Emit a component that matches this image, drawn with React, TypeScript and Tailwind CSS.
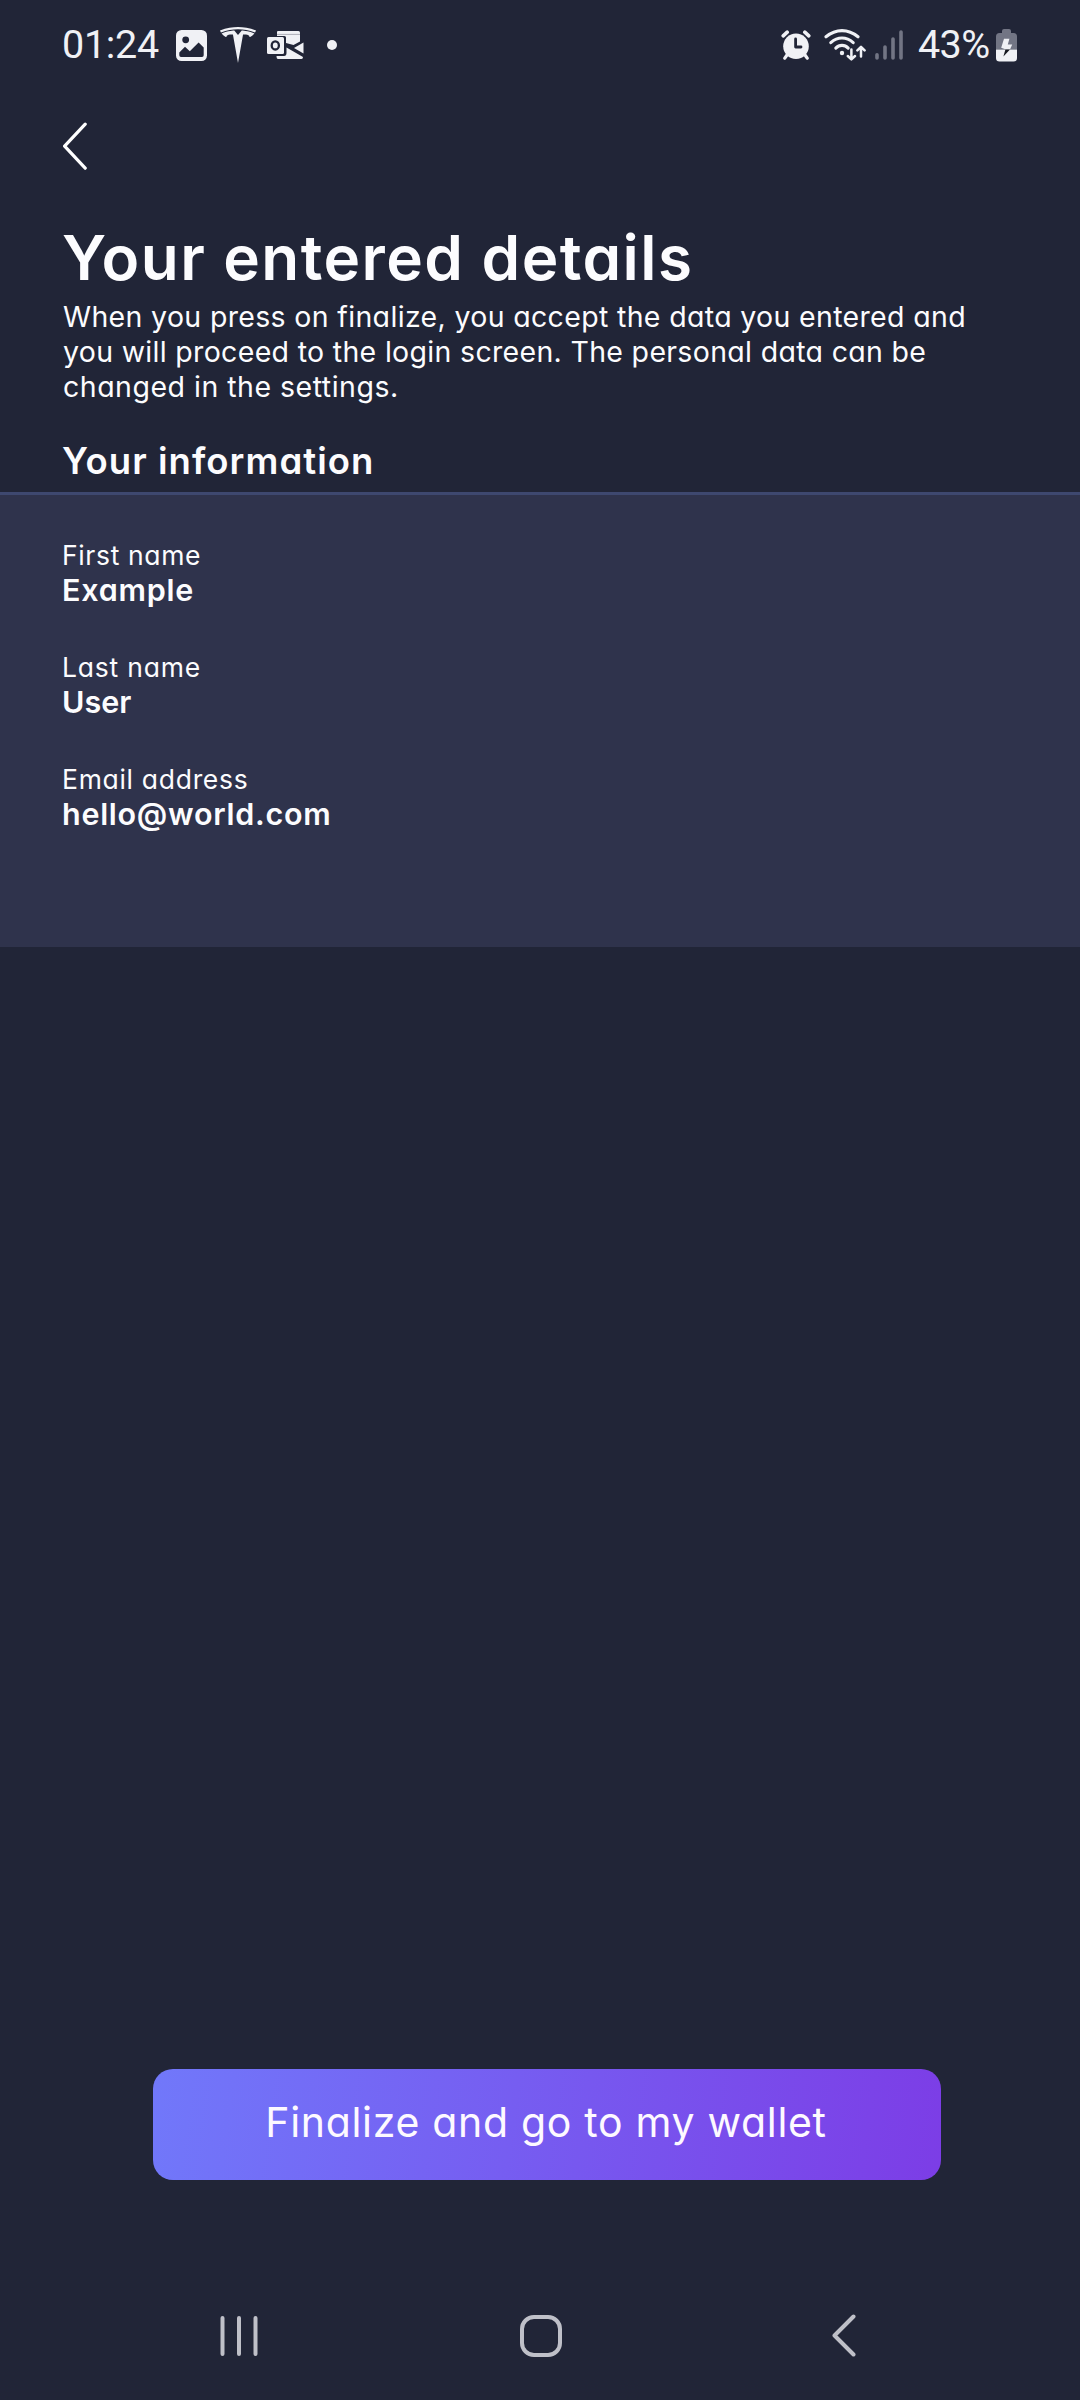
function PhotoIcon() {
  return (
    <svg className="h-[31px] w-[31px]" viewBox="0 0 31 31">
      <rect width="31" height="31" rx="5.5" fill="#f0f1f5" />
      <circle cx="9.7" cy="9.8" r="3.4" fill="#212537" />
      <path d="M3.3 22.5 9 16.8 13.8 21.2 22.6 12.6 27.7 17.6V25.2Q27.7 27 26 27H5Q3.3 27 3.3 25.2Z" fill="#212537" />
    </svg>
  );
}

function TeslaIcon() {
  return (
    <svg className="h-9 w-9" viewBox="0 0 24 24" fill="#f0f1f5">
      <path d="M12 5.362l2.475-3.026s4.245.09 8.471 2.054c-1.082 1.636-3.231 2.438-3.231 2.438-.146-1.439-1.154-1.79-4.354-1.79L12 24 8.619 5.034c-3.18 0-4.188.354-4.335 1.792 0 0-2.146-.795-3.229-2.43C5.28 2.431 9.525 2.34 9.525 2.34L12 5.362zM12 1.463c3.415-.03 7.326.528 11.328 2.28.535-.968.672-1.395.672-1.395C19.625.612 15.528.015 12 0 8.472.015 4.375.61 0 2.349c0 0 .195.525.672 1.396C4.674 1.989 8.585 1.435 12 1.46z" />
    </svg>
  );
}

function OutlookIcon() {
  return (
    <svg className="h-[28px] w-[37px]" viewBox="0 0 37 28">
      <path d="M11 0H31.5Q33 0 33 1.5V3H10V1Q10 0 11 0Z" fill="#f0f1f5" />
      <path d="M10 3H33V10.5L26.5 14 19 12V6.5Q19 5 17.5 5H10Z" fill="#f0f1f5" />
      <path d="M10 3.4H33" stroke="#9b9da8" strokeWidth=".8" />
      <path d="M36.5 11.5V22.5L27 17Z" fill="#f0f1f5" />
      <path d="M19.5 16.5 36 26Q36 28 34.5 28H11Q9.5 28 9.5 25H17Q19.5 25 19.5 22Z" fill="#f0f1f5" />
      <rect y="6" width="17" height="17" rx="1.5" fill="#f0f1f5" />
      <ellipse cx="8.3" cy="14.4" rx="3.6" ry="4.1" fill="none" stroke="#212537" strokeWidth="2.3" />
    </svg>
  );
}

function AlarmIcon() {
  return (
    <svg className="h-[30px] w-[30px]" viewBox="0 0 30 30" fill="none" strokeLinecap="round">
      <circle cx="15" cy="16.3" r="12.8" fill="#f0f1f5" />
      <path d="M2.2 5.8 6.2 2.2M23.8 2.2 27.8 5.8" stroke="#f0f1f5" strokeWidth="3.6" />
      <path d="M6 25 3.8 28.2M24 25 26.2 28.2" stroke="#f0f1f5" strokeWidth="3.2" />
      <path d="M14.6 9V17H20" stroke="#212537" strokeWidth="2.8" strokeLinejoin="round" />
    </svg>
  );
}

function WifiIcon() {
  return (
    <svg className="h-8 w-[42px]" viewBox="0 0 42 32" fill="none" stroke="#f0f1f5" strokeLinecap="round">
      <path d="M2 7.8Q9.5 1.6 18 1.6T34 7.8" strokeWidth="3.1" />
      <path d="M6.8 13.6Q12 9 18 9T29.2 13.6" strokeWidth="3.1" />
      <path d="M11.8 19.2Q14.5 16.4 18 16.4T24.2 19.2" strokeWidth="3.1" />
      <circle cx="18" cy="24" r="2.2" fill="#f0f1f5" stroke="none" />
      <path d="M27.4 20.5V30M23.8 27 27.4 30.4 31 27M37 27.4V18M33.4 21.4 37 17.8 40.6 21.4" strokeWidth="2.5" strokeLinejoin="round" />
    </svg>
  );
}

function SignalIcon() {
  return (
    <svg className="h-[30px] w-7" viewBox="0 0 28 30" stroke="#727584" strokeWidth="3.6" strokeLinecap="round">
      <path d="M2 24.8V28M10 17V28M18 9V28M26 2V28" />
    </svg>
  );
}

function BatteryIcon() {
  return (
    <svg className="h-[33px] w-[21px]" viewBox="0 0 21 33">
      <path d="M6 4V2Q6 0 8 0H13Q15 0 15 2V4H17.5Q21 4 21 7.5V20.5H0V7.5Q0 4 3.5 4Z" fill="#727584" />
      <path d="M0 20.5H21V29Q21 32.5 17.5 32.5H3.5Q0 32.5 0 29Z" fill="#f0f1f5" />
      <path d="M8 9.8H13.4L11.8 15.4H16.2L14 20.5H10L5.2 18.8Z" fill="#f0f1f5" />
      <path d="M9.4 20.5H14L7.4 27.4Z" fill="#16181f" />
    </svg>
  );
}

interface FieldProps {
  label: string;
  value: string;
  labelClass: string;
  valueClass: string;
}

function Field({ label, value, labelClass, valueClass }: FieldProps) {
  return (
    <div className="flex flex-col items-start">
      <span className={`text-[26.5px] leading-[35px] ${labelClass}`}>{label}</span>
      <span className={`text-[30.5px] leading-[34px] font-semibold ${valueClass}`}>{value}</span>
    </div>
  );
}

export default function App() {
  return (
    <div className="flex h-[2400px] w-[1080px] flex-col overflow-hidden bg-[#212537] font-[Inter,sans-serif] text-[#fcfcfe] [font-feature-settings:'cv11']">
      <header className="flex h-[90px] items-center justify-between pr-[63px] pl-[62px] font-[Roboto,sans-serif] text-[39.5px] leading-none text-[#f0f1f5]">
        <div className="flex items-center">
          <span className="w-[114px] tracking-[-0.3px]">01:24</span>
          <PhotoIcon />
          <div className="ml-[13px]"><TeslaIcon /></div>
          <div className="ml-[11px]"><OutlookIcon /></div>
          <span className="ml-[23px] h-2.5 w-2.5 rounded-full bg-[#f0f1f5]" />
        </div>
        <div className="flex items-center">
          <AlarmIcon />
          <div className="ml-[13px]"><WifiIcon /></div>
          <div className="ml-[9px]"><SignalIcon /></div>
          <span className="ml-[15px] w-[78px] tracking-[-0.6px]">43%</span>
          <BatteryIcon />
        </div>
      </header>

      <div className="flex h-[132px] items-start pt-8 pl-[62px]">
        <svg className="h-12 w-[26px]" viewBox="0 0 26 48" fill="none" stroke="#fff" strokeWidth="3.2" strokeLinecap="round" strokeLinejoin="round">
          <path d="M23.2 2.2 2.6 24.2 23.2 46.2" />
        </svg>
      </div>

      <main className="flex flex-1 flex-col">
        <div className="flex flex-col items-start px-[62px] whitespace-nowrap">
          <h1 className="text-[62px] leading-[72px] font-semibold tracking-[1.44px]">Your entered details</h1>
          <p className="mt-[5px] flex flex-col items-start pl-px text-[28.5px] leading-[35px]">
            <span className="tracking-[0.34px]">When you press on finalize, you accept the data you entered and</span>
            <span className="tracking-[0.32px]">you will proceed to the login screen. The personal data can be</span>
            <span className="tracking-[0.5px]">changed in the settings.</span>
          </p>
          <h2 className="mt-[35px] text-[36.5px] leading-[44px] font-semibold tracking-[1.05px]">Your information</h2>
        </div>
        <section className="mt-[9px] flex h-[455px] flex-col gap-[43px] border-t-[3px] border-[#3e486f] bg-[#2f334c] pt-[43px] pl-[62px]">
          <Field label="First name" value="Example" labelClass="tracking-[0.65px]" valueClass="tracking-[0.75px]" />
          <Field label="Last name" value="User" labelClass="tracking-[0.8px]" valueClass="tracking-normal" />
          <Field label="Email address" value="hello@world.com" labelClass="tracking-[0.7px]" valueClass="tracking-[0.72px]" />
        </section>
      </main>

      <button className="mb-[91px] ml-[153px] h-[111px] w-[788px] shrink-0 rounded-[20px] bg-[linear-gradient(98deg,#7178fa_0%,#7c3de6_100%)] pr-0.5 pb-1.5 text-[41px] leading-[50px] tracking-[0.69px] text-[#fdf9ff]">
        Finalize and go to my wallet
      </button>

      <nav className="flex h-[129px] shrink-0 items-center pl-[219px]">
        <svg className="h-[42px] w-10" viewBox="0 0 40 42" stroke="#bfc0c8" strokeWidth="4" strokeLinecap="round">
          <path d="M3.5 3V39M20 3V39M36.5 3V39" />
        </svg>
        <svg className="ml-[261px] h-[42px] w-[42px]" viewBox="0 0 42 42" fill="none" stroke="#bfc0c8" strokeWidth="4">
          <rect x="2" y="2" width="38" height="38" rx="12" />
        </svg>
        <svg className="ml-[269px] h-[43px] w-[26px]" viewBox="0 0 26 43" fill="none" stroke="#bfc0c8" strokeWidth="4" strokeLinecap="round" strokeLinejoin="round">
          <path d="M22.5 2.5 3.5 21.5 22.5 40.5" />
        </svg>
      </nav>
    </div>
  );
}
